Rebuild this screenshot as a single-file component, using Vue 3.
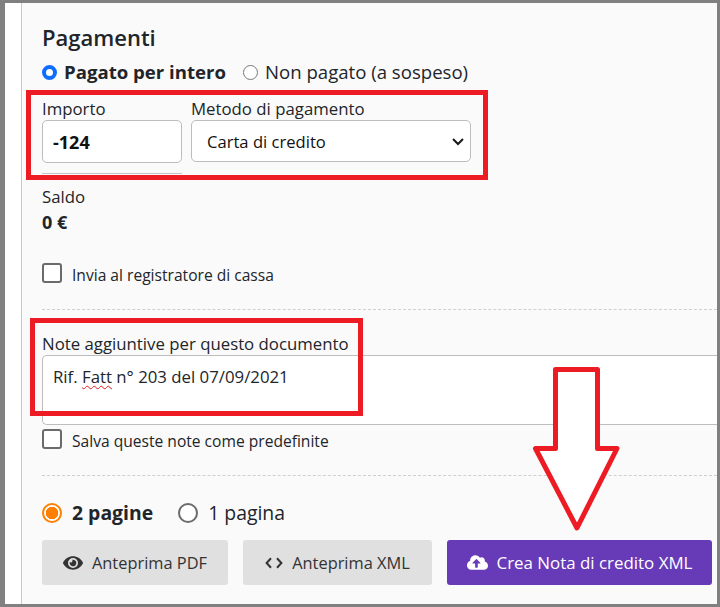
<template>
  <div class="frame">
    <div class="gutter"></div>
    <main class="panel">
      <h2 class="title">Pagamenti</h2>
      <div class="pay-row">
        <label class="opt strong"><span class="radio-sm on"></span>Pagato per intero</label>
        <label class="opt"><span class="radio-sm"></span>Non pagato (a sospeso)</label>
      </div>
      <div class="fields">
        <div class="amount">
          <div class="lbl">Importo</div>
          <div class="control value-bold">-124</div>
          <div class="rule"></div>
        </div>
        <div class="method">
          <div class="lbl">Metodo di pagamento</div>
          <div class="control select">
            <span>Carta di credito</span>
            <svg class="chev" width="14" height="10" viewBox="0 0 14 10"><path d="M2 3 7 8 12 3" fill="none" stroke="#1a1a1a" stroke-width="2"/></svg>
          </div>
        </div>
      </div>
      <div class="lbl saldo">Saldo</div>
      <div class="saldo-val">0 €</div>
      <label class="check first"><span class="box"></span>Invia al registratore di cassa</label>
      <div class="dash d1"></div>
      <div class="lbl notes-lbl">Note aggiuntive per questo documento</div>
      <div class="textarea">Rif. <span class="typo">Fatt</span> n° 203 del 07/09/2021</div>
      <label class="check second"><span class="box"></span>Salva queste note come predefinite</label>
      <div class="dash d2"></div>
      <div class="pages">
        <label class="opt-lg strong"><span class="radio-lg on"></span>2 pagine</label>
        <label class="opt-lg"><span class="radio-lg"></span>1 pagina</label>
      </div>
      <div class="actions">
        <button class="btn b1">
          <svg width="20" height="18" viewBox="0 0 576 512"><path fill="#333" d="M572.520 241.400C518.290 135.590 410.930 64 288 64S57.680 135.640 3.480 241.410a32.350 32.350 0 0 0 0 29.190C57.710 376.410 165.070 448 288 448s230.320-71.640 284.520-177.410a32.350 32.350 0 0 0 0-29.190zM288 400a144 144 0 1 1 144-144 143.930 143.930 0 0 1-144 144zm0-240a95.310 95.310 0 0 0-25.310 3.790 47.850 47.850 0 0 1-66.900 66.900A95.780 95.780 0 1 0 288 160z"/></svg>
          Anteprima PDF
        </button>
        <button class="btn b2">
          <svg width="18" height="12" viewBox="0 0 18 12"><path fill="none" stroke="#333" stroke-width="2" d="M6 1.200 1.600 6 6 10.800M12 1.200 16.400 6 12 10.800"/></svg>
          Anteprima XML
        </button>
        <button class="btn primary">
          <svg width="21" height="17" viewBox="0 0 640 512"><path fill="#fff" d="M537.600 226.600c4.100-10.700 6.400-22.400 6.400-34.600 0-53-43-96-96-96-19.700 0-38.100 6-53.300 16.200C367 64.200 315.300 32 256 32c-88.400 0-160 71.600-160 160 0 2.700.1 5.400.2 8.100C40.200 219.800 0 273.200 0 336c0 79.500 64.500 144 144 144h368c70.700 0 128-57.300 128-128 0-61.900-44-113.600-102.400-125.400zM393.400 288H328v112c0 8.800-7.200 16-16 16h-48c-8.800 0-16-7.200-16-16V288h-65.400c-14.300 0-21.400-17.200-11.300-27.300l105.400-105.400c6.200-6.200 16.400-6.200 22.600 0l105.400 105.400c10.100 10.100 2.900 27.300-11.300 27.300z"/></svg>
          Crea Nota di credito XML
        </button>
      </div>
    </main>
    <div class="mark m1"></div>
    <div class="mark m2"></div>
    <svg class="arrow" width="92" height="168" viewBox="530 365 92 168">
      <path d="M555.500 369.500H597.500V448.500H617L577 528 535.500 448.500H555.500Z" fill="#fff" stroke="#ed1c24" stroke-width="5" stroke-linejoin="round"/>
    </svg>
  </div>
</template>

<script setup>
</script>

<style>
html, body { margin: 0; padding: 0; }
</style>

<style scoped>
.frame {
  position: relative;
  width: 720px;
  height: 607px;
  box-sizing: border-box;
  border: solid #808080;
  border-width: 3px 3px 3px 5px;
  display: flex;
  overflow: hidden;
  background: #fff;
  font-family: "Open Sans", "Noto Sans", sans-serif;
  font-size: 16.8px;
  color: #212529;
}
.gutter { width: 16px; flex: none; }
.panel {
  flex: 1;
  min-width: 0;
  box-sizing: border-box;
  border-left: 1px solid #c8c8c8;
  background: #fafafa;
  padding-left: 20px;
}
.title {
  margin: 21px 0 0;
  font-size: 22px;
  line-height: 26px;
  font-weight: 600;
}
.pay-row { display: flex; gap: 17px; margin-top: 10px; font-size: 18.6px; line-height: 24px; }
.opt { display: flex; align-items: center; }
.strong { font-weight: 700; }
.radio-sm {
  width: 15px; height: 15px; box-sizing: border-box; border-radius: 50%;
  border: 1px solid #777; background: #fff; margin-right: 7px; flex: none;
}
.radio-sm.on { border: 4px solid #0d6efd; }
.fields { display: flex; gap: 9px; margin-top: 14px; }
.lbl { font-size: 16.8px; line-height: 22px; }
.amount { width: 140px; }
.method { width: 280px; }
.control {
  box-sizing: border-box;
  height: 43px;
  border: 1px solid #bdbdbd;
  border-radius: 5px;
  background: #fff;
  padding-left: 10px;
  display: flex;
  align-items: center;
  color: #111;
}
.value-bold { font-weight: 700; font-size: 18px; }
.select { height: 42px; justify-content: space-between; padding: 0 5px 0 15px; font-size: 16.6px; }
.rule { height: 1px; background: #c4c4c4; margin-top: 10px; }
.saldo { margin-top: 12px; }
.saldo-val { font-weight: 700; font-size: 18px; line-height: 22px; margin-top: 3px; }
.check { display: flex; align-items: flex-start; font-size: 15.6px; line-height: 24px; }
.box {
  width: 20px; height: 20px; box-sizing: border-box; border: 2px solid #6b6b6b;
  border-radius: 3px; background: #fff; margin-right: 10px; flex: none;
}
.first { margin-top: 30px; }
.dash { border-top: 1px dashed #cfcfcf; }
.d1 { margin-top: 22px; }
.notes-lbl { margin-top: 23px; }
.textarea {
  box-sizing: border-box;
  height: 70px;
  margin-right: -4px;
  border: 1px solid #bdbdbd;
  border-right: 0;
  border-radius: 5px 0 0 5px;
  background: #fff;
  padding: 10px 10px;
  line-height: 22px;
  color: #212529;
}
.typo { text-decoration: underline wavy #e02020 1px; text-underline-offset: 2px; }
.second { margin-top: 4px; }
.d2 { margin-top: 22px; }
.pages { display: flex; gap: 25px; margin-top: 26px; font-size: 19.4px; line-height: 22px; }
.opt-lg { display: flex; align-items: center; }
.radio-lg {
  width: 20px; height: 20px; box-sizing: border-box; border-radius: 50%;
  border: 2px solid #6b6b6b; background: #fff; margin-right: 10px; flex: none;
}
.radio-lg.on {
  border-color: #ff8000;
  background: radial-gradient(circle, #ff8000 0 6px, #fff 6.5px);
}
.actions { display: flex; gap: 15px; margin-top: 16px; }
.btn {
  height: 45px;
  box-sizing: border-box;
  border: 0;
  border-radius: 3px;
  background: #e0e0e0;
  color: #333;
  font: inherit;
  font-size: 16.4px;
  display: flex;
  align-items: center;
  justify-content: center;
  gap: 9px;
  padding: 0;
}
.b1 { width: 186px; }
.b2 { width: 189px; }
.primary { width: 265px; background: #673ab7; color: #fff; font-size: 16.9px; }
.mark { position: absolute; box-sizing: border-box; border: 5px solid #ed1c24; }
.m1 { left: 21px; top: 87px; width: 462px; height: 90px; }
.m2 { left: 25px; top: 315px; width: 333px; height: 98px; }
.arrow { position: absolute; left: 525px; top: 362px; }
</style>
